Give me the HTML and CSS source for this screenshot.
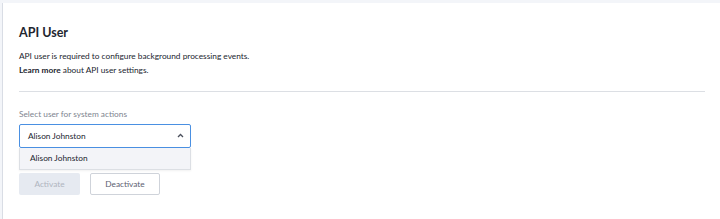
FILE: index.html
```html
<!DOCTYPE html>
<html>
<head>
    <title>API User</title>
    <link rel="stylesheet" href="styles.css">
</head>
<body>
    <div class="page">
        <div class="card">
            <h3>API User</h3>
            <p class="intro">API user is required to configure background processing events.<br>
                <a href="#" class="learn">Learn more</a> about API user settings.</p>
            <hr class="divider">

            <label class="field-label">Select user for system actions</label>
            <div class="select-wrap">
                <div class="select open">
                    <span>Alison Johnston</span>
                    <svg class="caret" width="7" height="5" viewBox="0 0 7 5">
                        <path d="M1 4 L3.5 1.5 L6 4" fill="none" stroke="#4a4f5c" stroke-width="1.3"/>
                    </svg>
                </div>
                <div class="menu">
                    <div class="option">Alison Johnston</div>
                </div>
            </div>

            <div class="actions">
                <button class="btn btn-primary" disabled>Activate</button>
                <button class="btn btn-outline">Deactivate</button>
            </div>
        </div>
    </div>
</body>
</html>
```
FILE: styles.css
```css
:root {
    --bg-color: #f3f5f9;
    --card-bg: #fff;
    --text-color: #22262f;
    --label-color: #80858f;
    --border: #dcdfe4;
    --focus: #4a90e2;
    --menu-bg: #f3f4f8;
    --disabled-bg: #e6eaf1;
    --disabled-text: #b0b5bf;
}

body {
    margin: 0;
    font-family: Lato, 'Open Sans', Arial, sans-serif;
    background: var(--bg-color);
    color: var(--text-color);
}

.page {
    padding: 3px 0 0 2px;
    height: 216px;
}

.card {
    background: var(--card-bg);
    border-left: 1px solid #d9dde5;
    padding: 22px 15px 0 16px;
    height: 100%;
    box-sizing: border-box;
}

h3 {
    margin: 0 0 8px;
    font-size: 12.5px;
    font-weight: 700;
    line-height: 16px;
}

.intro {
    margin: 0;
    font-size: 8.3px;
    line-height: 14px;
}

.learn {
    color: var(--text-color);
    font-weight: 700;
    text-decoration: none;
}

.divider {
    border: none;
    border-top: 1px solid var(--border);
    margin: 14px 0 16px;
}

.field-label {
    display: block;
    font-size: 8.3px;
    line-height: 12px;
    color: var(--label-color);
    margin-bottom: 4px;
}

.select-wrap {
    width: 172px;
}

.select {
    display: flex;
    align-items: center;
    justify-content: space-between;
    height: 24px;
    padding: 0 6px 0 8px;
    border: 1px solid var(--focus);
    border-radius: 2px;
    box-sizing: border-box;
    font-size: 8.3px;
}

.caret {
    margin-bottom: 1px;
}

.menu {
    background: var(--menu-bg);
    border: 1px solid var(--border);
    border-top: none;
    box-shadow: 0 1px 2px rgba(0, 0, 0, 0.06);
}

.option {
    height: 21px;
    line-height: 21px;
    padding: 0 10px;
    font-size: 8.3px;
}

.actions {
    display: flex;
    gap: 10px;
    margin-top: 3px;
}

.btn {
    height: 22px;
    padding: 0;
    font-family: inherit;
    font-size: 8.3px;
    border-radius: 2px;
    box-sizing: border-box;
}

.btn-primary {
    width: 61px;
    background: var(--disabled-bg);
    color: var(--disabled-text);
    border: none;
}

.btn-outline {
    width: 70px;
    background: #fff;
    color: #5a6070;
    border: 1px solid #cfd3da;
}
```
